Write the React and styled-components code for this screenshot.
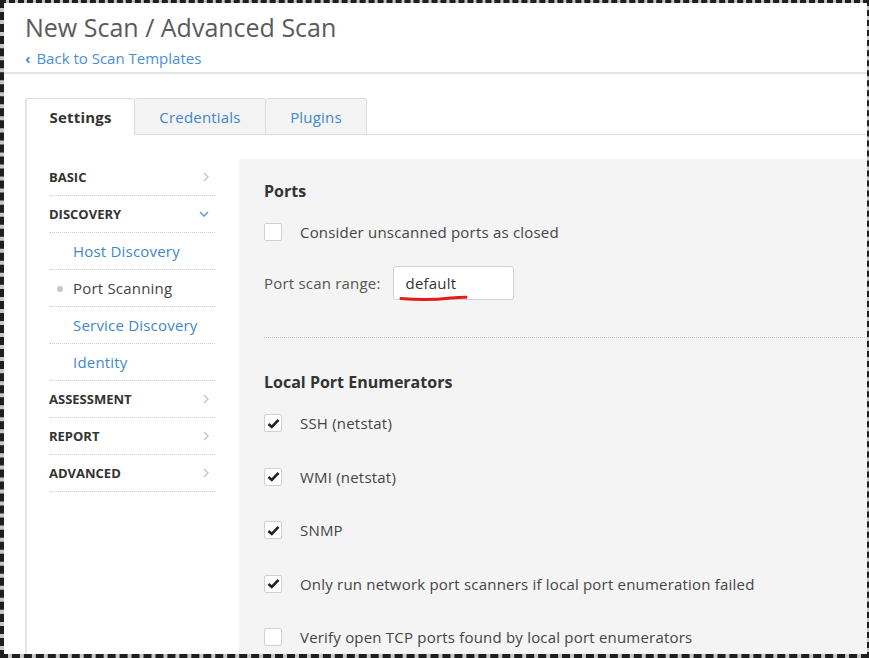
import styled, { createGlobalStyle } from "styled-components";

const GlobalStyle = createGlobalStyle`
  html, body {
    margin: 0;
    padding: 0;
    background: #fff;
  }
  body {
    font-family: "Open Sans", "Liberation Sans", sans-serif;
    color: #444;
  }
`;

const tabs = [
  { label: "Settings", width: 110, active: true },
  { label: "Credentials", width: 131 },
  { label: "Plugins", width: 101 },
];

const sidebar = [
  { label: "BASIC", type: "group" },
  { label: "DISCOVERY", type: "group", open: true },
  { label: "Host Discovery", type: "item" },
  { label: "Port Scanning", type: "item", active: true },
  { label: "Service Discovery", type: "item" },
  { label: "Identity", type: "item" },
  { label: "ASSESSMENT", type: "group" },
  { label: "REPORT", type: "group" },
  { label: "ADVANCED", type: "group" },
];

const enumerators = [
  { label: "SSH (netstat)", checked: true },
  { label: "WMI (netstat)", checked: true },
  { label: "SNMP", checked: true },
  {
    label: "Only run network port scanners if local port enumeration failed",
    checked: true,
  },
  { label: "Verify open TCP ports found by local port enumerators", checked: false },
];

function Chevron({ down }) {
  if (down) {
    return (
      <svg width="10" height="6" viewBox="0 0 10 6">
        <polyline points="1,1 5,5 9,1" fill="none" stroke="#6b9ccc" strokeWidth="1.6" />
      </svg>
    );
  }
  return (
    <svg width="6" height="10" viewBox="0 0 6 10">
      <polyline points="1,1 5,5 1,9" fill="none" stroke="#c4c4c4" strokeWidth="1.4" />
    </svg>
  );
}

function Checkbox({ checked }) {
  return (
    <Box>
      {checked && (
        <svg width="13" height="11" viewBox="0 0 13 11">
          <path d="M1.5 6 L4.8 9 L11.5 1.8" fill="none" stroke="#222" strokeWidth="2.6" />
        </svg>
      )}
    </Box>
  );
}

export default function App() {
  return (
    <Frame>
      <GlobalStyle />
      <Page>
        <Header>
          <Title>New Scan / Advanced Scan</Title>
          <BackLink>
            <span>‹</span> Back to Scan Templates
          </BackLink>
        </Header>

        <Main>
          <TabBar>
            {tabs.map((tab) => (
              <Tab key={tab.label} $active={tab.active} $width={tab.width}>
                {tab.label}
              </Tab>
            ))}
            <TabFill />
          </TabBar>

          <Body>
            <Sidebar>
              {sidebar.map((entry) => (
                <NavRow key={entry.label}>
                  {entry.type === "group" ? (
                    <>
                      <GroupLabel>{entry.label}</GroupLabel>
                      <Chevron down={entry.open} />
                    </>
                  ) : (
                    <ItemLabel $active={entry.active}>
                      {entry.active && <Dot />}
                      {entry.label}
                    </ItemLabel>
                  )}
                </NavRow>
              ))}
            </Sidebar>

            <Panel>
              <Heading>Ports</Heading>
              <CheckRow $top={19}>
                <Checkbox />
                <CheckLabel>Consider unscanned ports as closed</CheckLabel>
              </CheckRow>
              <FieldRow>
                <FieldLabel>Port scan range:</FieldLabel>
                <InputWrap>
                  <Input>default</Input>
                  <Scribble width="80" height="10" viewBox="0 0 80 10">
                    <path
                      d="M8 5.5 C 25 7, 45 6.5, 58 5 C 66 4.2, 70 4, 73 4.2"
                      fill="none"
                      stroke="#e31b1b"
                      strokeWidth="3"
                      strokeLinecap="round"
                    />
                  </Scribble>
                </InputWrap>
              </FieldRow>
              <Separator />
              <Heading $top={33}>Local Port Enumerators</Heading>
              {enumerators.map((item, i) => (
                <CheckRow key={item.label} $top={i === 0 ? 19 : 31.5}>
                  <Checkbox checked={item.checked} />
                  <CheckLabel>{item.label}</CheckLabel>
                </CheckRow>
              ))}
            </Panel>
          </Body>
        </Main>
      </Page>
    </Frame>
  );
}

const Frame = styled.div`
  box-sizing: border-box;
  width: 869px;
  height: 658px;
  overflow: hidden;
  border-style: dashed;
  border-color: #1f1f1f;
  border-width: 3px 2px 4px 4px;
  background: #c8c8c8;
`;

const Page = styled.div`
  height: 100%;
  background: #fff;
  display: flex;
  flex-direction: column;
`;

const Header = styled.div`
  padding: 7px 0 4px 21px;
  border-bottom: 2px solid #e4e4e4;
`;

const Title = styled.h1`
  margin: 0;
  font-size: 25px;
  line-height: 34px;
  font-weight: 400;
  color: #5a5a5a;
`;

const BackLink = styled.a`
  display: block;
  margin-top: 4px;
  font-size: 15px;
  line-height: 20px;
  color: #4a8fd3;

  span {
    font-weight: 700;
    margin-right: 2px;
  }
`;

const Main = styled.div`
  flex: 1;
  padding: 24px 0 0 21px;
  display: flex;
  flex-direction: column;
  min-height: 0;
`;

const TabBar = styled.div`
  display: flex;
  height: 37px;
`;

const Tab = styled.div`
  box-sizing: border-box;
  width: ${({ $width }) => $width}px;
  display: flex;
  align-items: center;
  justify-content: center;
  font-size: 15px;
  letter-spacing: 0.2px;
  border: 1px solid #dcdcdc;
  border-left: ${({ $active }) => ($active ? "2px solid #e4e4e4" : "none")};
  border-bottom: ${({ $active }) => ($active ? "none" : "1px solid #dcdcdc")};
  border-radius: 3px 3px 0 0;
  background: ${({ $active }) => ($active ? "#fff" : "#f3f3f3")};
  color: ${({ $active }) => ($active ? "#333" : "#3f87c9")};
  font-weight: ${({ $active }) => ($active ? 700 : 400)};
`;

const TabFill = styled.div`
  flex: 1;
  border-bottom: 1px solid #dcdcdc;
`;

const Body = styled.div`
  flex: 1;
  display: flex;
  border-left: 2px solid #e4e4e4;
`;

const Sidebar = styled.div`
  width: 166px;
  padding: 24px 24px 0 22px;
`;

const NavRow = styled.div`
  box-sizing: border-box;
  height: 37px;
  display: flex;
  align-items: center;
  justify-content: space-between;
  padding-right: 6px;
  border-bottom: 1px dotted #cfcfcf;
`;

const GroupLabel = styled.span`
  font-size: 13px;
  font-weight: 700;
  color: #333;
`;

const ItemLabel = styled.span`
  position: relative;
  padding-left: 24px;
  font-size: 15px;
  letter-spacing: 0.2px;
  color: ${({ $active }) => ($active ? "#444" : "#3f87c9")};
`;

const Dot = styled.i`
  position: absolute;
  left: 8px;
  top: 8px;
  width: 6px;
  height: 6px;
  border-radius: 50%;
  background: #c8c8c8;
`;

const Panel = styled.div`
  flex: 1;
  margin-top: 24px;
  padding: 21px 0 0 25px;
  background: #f4f4f4;
`;

const Heading = styled.h2`
  margin: ${({ $top }) => $top || 0}px 0 0;
  font-size: 16px;
  line-height: 22px;
  font-weight: 700;
  color: #333;
`;

const CheckRow = styled.div`
  display: flex;
  align-items: center;
  gap: 18px;
  height: 22px;
  margin-top: ${({ $top }) => $top}px;
`;

const Box = styled.span`
  box-sizing: border-box;
  width: 18px;
  height: 18px;
  display: flex;
  align-items: center;
  justify-content: center;
  background: #fff;
  border: 1px solid #d0d0d0;
  border-radius: 2px;
`;

const CheckLabel = styled.span`
  font-size: 15px;
  letter-spacing: 0.2px;
  color: #444;
  white-space: nowrap;
`;

const FieldRow = styled.div`
  display: flex;
  align-items: center;
  gap: 12px;
  margin-top: 23px;
`;

const FieldLabel = styled.span`
  font-size: 15px;
  letter-spacing: 0.2px;
  color: #555;
`;

const InputWrap = styled.div`
  position: relative;
`;

const Input = styled.div`
  box-sizing: border-box;
  width: 121px;
  height: 34px;
  padding: 0 12px;
  display: flex;
  align-items: center;
  font-size: 15px;
  letter-spacing: 0.2px;
  color: #333;
  background: #fff;
  border: 1px solid #d2d2d2;
  border-radius: 3px;
`;

const Scribble = styled.svg`
  position: absolute;
  left: 0;
  top: 27px;
`;

const Separator = styled.div`
  margin-top: 37px;
  border-bottom: 1px dotted #c8c8c8;
`;
